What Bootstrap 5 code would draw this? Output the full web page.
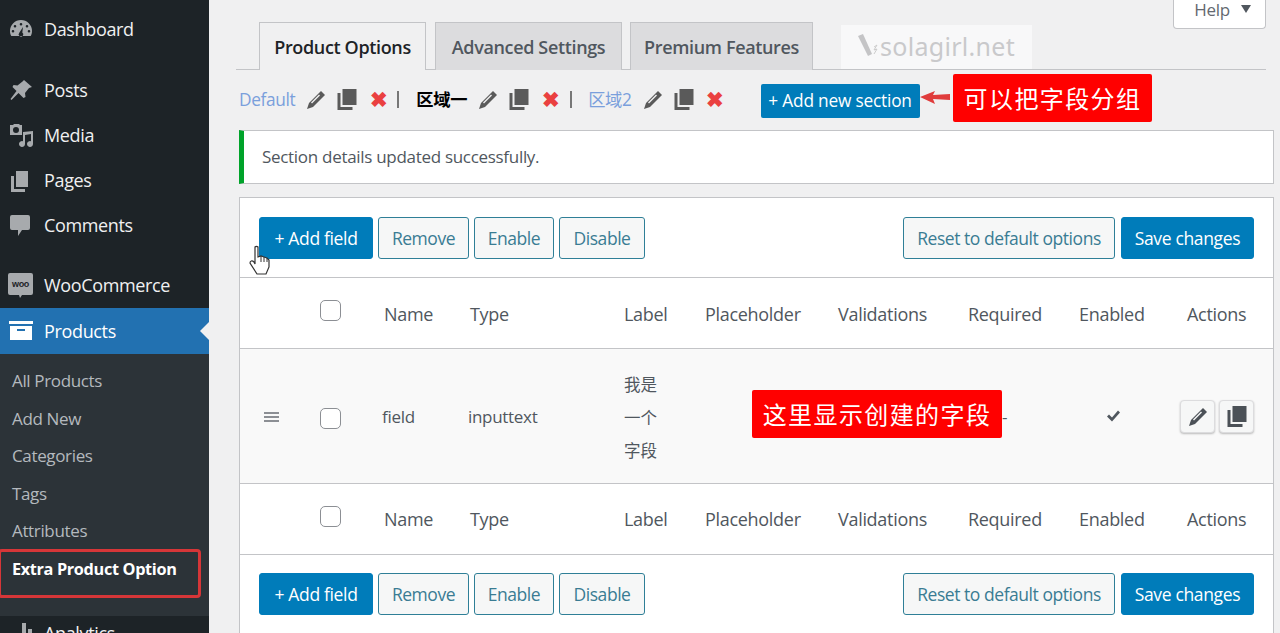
<!DOCTYPE html>
<html lang="en"><head><meta charset="utf-8"><title>Product Options</title>
<link href="https://cdn.jsdelivr.net/npm/bootstrap@5.3.0/dist/css/bootstrap.min.css" rel="stylesheet">
<style>
html,body{height:633px;overflow:hidden}
body{font-family:"Open Sans","Noto Sans CJK SC",sans-serif;background:#f0f0f1;color:#50575e;font-size:17px;letter-spacing:-.35px}
.shell{height:633px;overflow:hidden}
.wp-side{width:209px;flex:none;background:#1d2327;color:#f0f0f1;padding-top:7px;height:633px;overflow:hidden;font-size:18px}
.side-item{height:45px;display:flex;align-items:center;gap:0;color:#f0f0f1}
.side-item .ico{width:44px;padding-left:9px;flex:none;display:flex;align-items:center}
.side-item svg{fill:#a7aaad}
.gap-a{margin-top:17px}
.gap-b{margin-top:14.5px}
.side-active{background:#2271b1;color:#fff;position:relative;height:46px;padding-top:1px}
.side-active svg{fill:#fff}
.side-active::after{content:"";position:absolute;right:0;top:14px;border:9px solid transparent;border-right-color:#f0f0f1;border-left:0}
.side-sub{background:#2c3338;padding:8.5px 0 0;height:262px;color:#b4b9be;margin-bottom:0}
.side-sub div{height:37.5px;display:flex;align-items:center;padding-left:12px;font-size:17px}
.side-sub .cur{color:#fff;font-weight:700;font-size:16.3px;padding-top:1px}
.side-box{position:absolute;left:-2px;top:549px;width:203px;height:49px;border:3px solid #d63638;border-radius:4px}
.wp-main{flex:1;min-width:0;position:relative;padding-right:6px}
.help-line{height:22px;display:flex;justify-content:flex-end;padding-right:8px}
.help-btn{width:93px;height:30px;margin-top:-1px;background:#fff;border:1px solid #c3c4c7;border-top:0;border-radius:0 0 4px 4px;color:#646970;font-size:17px;display:flex;align-items:flex-start;justify-content:center;gap:9px;line-height:22px;padding-left:6px}
.help-btn i{border:5px solid transparent;border-top:8px solid #50575e;border-bottom:0;margin-left:2px;margin-top:6px;width:0;height:0}
.tab-bar{margin-left:27px;margin-right:8px;border-bottom:1px solid #c3c4c7;display:flex;padding-left:23px;height:48px;gap:8px}
.tab-it{height:48px;border:1px solid #c3c4c7;border-bottom:0;background:#dcdcde;font-size:18px;font-weight:600;color:#50575e;display:flex;align-items:center;justify-content:center;letter-spacing:-.35px;padding-top:2px}
.tab-on{background:#f0f0f1;color:#1d2327;height:48px;margin-bottom:-1px;margin-right:1px}
.mark-w{margin-left:20px;margin-top:3px;width:191px;height:44px;background:#f8f8f9;color:#c9c9cb;font-size:25px;display:flex;align-items:center;padding-left:15px;gap:1px;letter-spacing:.3px;font-family:"Noto Sans",sans-serif}
.sec-row{margin-left:30px;height:59px;display:flex;align-items:center;font-size:17.3px;position:relative}
.sec-row a{color:#7a9fdc;text-decoration:none}
.sec-act{display:flex;align-items:center;gap:11px;margin-left:11px;margin-right:10px}
.x-mark{color:#ea4040;font-weight:700;margin-left:2px;font-size:21px;line-height:1;width:17px;display:flex;justify-content:center}
.sec-sep{width:2px;height:17px;background:#777;margin-right:17px}
.sec-sep.tail{margin-right:16px}
.sec-cur{color:#000;font-weight:700}
.add-sec{margin-left:27px;margin-top:2px;height:34px;width:159px;padding:0;background:#007cba;color:#fff;font-size:17.3px;border:0;border-radius:2px;letter-spacing:-.2px;white-space:nowrap}
.notice-ok{margin-left:30px;height:54px;margin-top:1px;background:#fff;border:1px solid #c3c4c7;border-left:5px solid #00a32a;padding-left:18px;display:flex;align-items:center;font-size:17px;color:#50575e;letter-spacing:-.3px}
.opt-panel{margin:13px 0 0 30px;background:#fff;border:1px solid #c3c4c7;border-bottom:0;height:460px}
.opt-tools{height:79px;padding:19px 19px 0;display:flex;gap:5px}
.opt-tools.low{padding-top:18px}
.tool-btn{height:42px;padding:0;background:#f6f7f7;border:1px solid #2f7f97;border-radius:3px;color:#3a7c93;font-size:17.5px;letter-spacing:-.45px;white-space:nowrap}
.tool-pri{background:#007cba;border-color:#007cba;color:#fff;letter-spacing:-.35px}
.w-add{width:114px}.w-rem{width:91px}.w-ena{width:80px}.w-dis{width:86px}.w-res{width:212px;margin-right:1px}.w-sav{width:133px}
.opt-grid{table-layout:fixed;width:100%;margin:0;border-collapse:collapse}
.opt-grid th,.opt-grid td{padding:0;font-weight:400;vertical-align:middle;font-size:18px;color:#50575e;border-top:1px solid #c3c4c7;background:transparent;white-space:nowrap;letter-spacing:-.3px}
.opt-grid .r-h{height:71px}
.opt-grid .r-top th:nth-child(n+3){padding-top:2px}
.opt-grid .r-f{height:135px;background:#f9f9f9}
.opt-grid .r-f td{font-size:17px;padding-top:2px}
.opt-grid tr:last-child th{border-bottom:1px solid #c3c4c7}
.cb-box{width:21px;height:21px;display:block;margin-left:80px;border:1px solid #8c8f94;border-radius:5px;background:#fff;margin-top:-6px}
.r-f .cb-box{margin-top:3px}
.drag-bars{display:block;width:15px;height:10px;margin-left:24px;border-top:2px solid #8c8f94;border-bottom:2px solid #8c8f94;position:absolute;top:4px}
.drag-bars::after{content:"";position:absolute;left:0;right:0;top:2px;height:2px;background:#8c8f94}
.lab-cn{line-height:33px;white-space:normal;width:40px;font-size:16.5px;letter-spacing:0}
.icon-btn{width:35px;height:33px;background:#f6f7f7;border:1px solid #dcdcde;border-radius:4px;box-shadow:0 1px 2px #bbb;display:flex;align-items:center;justify-content:center;padding:0}
.act-cell{margin-left:-7px;margin-top:-1px}
.dash-c{display:block;padding-left:34px}
.tick-s{margin:0 0 6px 27px}
.note-red{position:absolute;background:#f00;color:#fff;border-radius:2px;display:flex;align-items:center;justify-content:center;letter-spacing:1.4px;font-size:24px;font-family:"Noto Sans CJK SC",sans-serif}
.note-a{left:744px;top:74px;width:199px;height:48px}
.note-b{left:543px;top:390px;width:250px;height:48px}
.arrow-r{position:absolute;left:711px;top:89px}
.hand-c{position:absolute;left:40px;top:245px}
.pull-a{margin-left:-2px}
</style></head><body>
<div class="shell d-flex position-relative">
<nav class="wp-side">
 <div class="side-item" style="height:44px"><span class="ico"><svg width="24" height="24" viewBox="0 0 24 24"><path d="M12 3A11 11 0 0 0 1 14c0 2 .5 3.600 1.300 5h19.400c.8-1.400 1.300-3 1.300-5A11 11 0 0 0 12 3zm0 3a1.300 1.300 0 1 1 0 2.600a1.300 1.300 0 0 1 0-2.600zM6 8a1.300 1.300 0 1 1 0 2.600A1.300 1.300 0 0 1 6 8zm12 0a1.300 1.300 0 1 1 0 2.600A1.300 1.300 0 0 1 18 8zM4 13a1.300 1.300 0 1 1 0 2.600A1.300 1.300 0 0 1 4 13zm16 0a1.300 1.300 0 1 1 0 2.600 1.300 1.300 0 0 1 0-2.600zM14 10l-.7 5.500a2.300 2.300 0 1 1-3 .3z" fill-rule="evenodd"/></svg></span>Dashboard</div>
 <div class="side-item gap-a"><span class="ico"><svg width="24" height="24" viewBox="0 0 24 24"><path d="M15 1l8 7-3 1-4 5 .5 4-2 1-5-5-7 7-1-1 6-8-4-4 1-2 4 .5 5-4z"/></svg></span>Posts</div>
 <div class="side-item"><span class="ico"><svg width="25" height="25" viewBox="0 0 25 25"><path d="M1 2h3l1-1h5l1 1h2v10H1zm6 2a3 3 0 1 0 0 6 3 3 0 0 0 0-6zM24 8v13a3 3 0 1 1-2-2.800V11l-6 1v9a3 3 0 1 1-2-2.800V9z" fill-rule="evenodd"/></svg></span>Media</div>
 <div class="side-item"><span class="ico"><svg width="24" height="24" viewBox="0 0 24 24"><path d="M7 1h12v16H7zM2 6h3v13h11v3H2z" transform="translate(0,1)"/></svg></span>Pages</div>
 <div class="side-item"><span class="ico"><svg width="24" height="24" viewBox="0 0 24 24"><path d="M3 1h16a2 2 0 0 1 2 2v11a2 2 0 0 1-2 2h-6l-4 6v-6H3a2 2 0 0 1-2-2V3a2 2 0 0 1 2-2z"/></svg></span>Comments</div>
 <div class="side-item gap-b"><span class="ico" style="padding-left:7px"><svg width="27" height="27" viewBox="0 0 27 27"><path d="M3 1h21a2 2 0 0 1 2 2v18a2 2 0 0 1-2 2h-9l-2 3-1-3H3a2 2 0 0 1-2-2V3a2 2 0 0 1 2-2z"/><text x="13.500" y="15" font-size="9" font-weight="700" fill="#1d2327" text-anchor="middle" font-family="Liberation Sans,sans-serif">woo</text></svg></span>WooCommerce</div>
 <div class="side-item side-active"><span class="ico"><svg width="24" height="22" viewBox="0 0 24 22"><path d="M0 1h24v3H0zM1 6h22v14H1zm7 3v2h8V9z" fill-rule="evenodd"/></svg></span>Products</div>
 <div class="side-sub"><div>All Products</div><div>Add New</div><div>Categories</div><div>Tags</div><div>Attributes</div><div class="cur">Extra Product Option</div></div>
 <div class="side-item" style="height:24px;margin-top:6px;align-items:flex-start"><span class="ico" style="padding-left:17px"><svg width="16" height="22" viewBox="0 0 16 22"><path d="M0 12h4v10H0zM6 0h4v22H6zM12 6h4v16h-4z" transform="translate(-1,1)"/></svg></span><span style="line-height:22px">Analytics</span></div>
</nav>
<main class="wp-main">
 <div class="help-line"><div class="help-btn">Help <i></i></div></div>
 <div class="tab-bar">
  <div class="tab-it tab-on" style="width:167px">Product Options</div>
  <div class="tab-it" style="width:187px">Advanced Settings</div>
  <div class="tab-it" style="width:183px">Premium Features</div>
  <div class="mark-w"><svg width="23" height="28" viewBox="0 0 23 28"><path d="M2 3l5-2 9 20-4 2z" fill="#c4c4c6"/><path d="M18 14l3-2-3 5 3-1-3 5" fill="none" stroke="#ccc"/></svg>solagirl.net</div>
 </div>
 <div class="sec-row">
  <a href="#">Default</a>
  <span class="sec-act"><svg width="20" height="20" viewBox="0 0 20 20"><path d="M15 1l4 4L7 17l-6 2 2-6z" fill="#5a5a5a"/><path d="M13.500 5L5.500 13" stroke="#f0f0f1" stroke-width="1.500"/></svg><svg width="20" height="21" viewBox="0 0 19 21"><path d="M5 0h14v16H5zM0 4h3v14h12v3H0z" fill="#5a5a5a"/></svg><span class="x-mark">✖</span></span>
  <span class="sec-sep"></span>
  <span class="sec-cur">区域一</span>
  <span class="sec-act" style="margin-right:11px"><svg width="20" height="20" viewBox="0 0 20 20"><path d="M15 1l4 4L7 17l-6 2 2-6z" fill="#5a5a5a"/><path d="M13.500 5L5.500 13" stroke="#f0f0f1" stroke-width="1.500"/></svg><svg width="20" height="21" viewBox="0 0 19 21"><path d="M5 0h14v16H5zM0 4h3v14h12v3H0z" fill="#5a5a5a"/></svg><span class="x-mark">✖</span></span>
  <span class="sec-sep tail"></span>
  <a href="#">区域2</a>
  <span class="sec-act"><svg width="20" height="20" viewBox="0 0 20 20"><path d="M15 1l4 4L7 17l-6 2 2-6z" fill="#5a5a5a"/><path d="M13.500 5L5.500 13" stroke="#f0f0f1" stroke-width="1.500"/></svg><svg width="20" height="21" viewBox="0 0 19 21"><path d="M5 0h14v16H5zM0 4h3v14h12v3H0z" fill="#5a5a5a"/></svg><span class="x-mark">✖</span></span>
  <button class="add-sec">+ Add new section</button>
 </div>
 <div class="notice-ok">Section details updated successfully.</div>
 <section class="opt-panel">
  <div class="opt-tools">
   <button class="tool-btn tool-pri w-add">+ Add field</button><button class="tool-btn w-rem">Remove</button><button class="tool-btn w-ena">Enable</button><button class="tool-btn w-dis">Disable</button>
   <span class="ms-auto"></span>
   <button class="tool-btn w-res">Reset to default options</button><button class="tool-btn tool-pri w-sav">Save changes</button>
  </div>
  <table class="opt-grid"><colgroup><col style="width:144px"><col style="width:0"><col style="width:86px"><col style="width:154px"><col style="width:81px"><col style="width:133px"><col style="width:130px"><col style="width:111px"><col style="width:108px"><col></colgroup>
  <tbody>
  <tr class="r-h r-top"><th><span class="cb-box"></span></th><th></th><th>Name</th><th>Type</th><th>Label</th><th>Placeholder</th><th>Validations</th><th>Required</th><th>Enabled</th><th>Actions</th></tr>
  <tr class="r-f"><td><span class="position-relative d-block"><span class="drag-bars"></span><span class="cb-box"></span></span></td><td></td><td><span class="pull-a d-block">field</span></td><td><span class="pull-a d-block">inputtext</span></td><td><div class="lab-cn">我是一个字段</div></td><td></td><td></td><td><span class="dash-c">-</span></td><td><svg class="tick-s" width="15" height="14" viewBox="0 0 15 13"><path d="M1 7l2-2 3 3 6-7 2 2-8 9z" fill="#50575e"/></svg></td><td><div class="d-flex gap-1 act-cell"><button class="icon-btn"><svg width="20" height="20" viewBox="0 0 20 20"><path d="M15 1l4 4L7 17l-6 2 2-6z" fill="#4b5157"/><path d="M13.500 5L5.500 13" stroke="#f6f7f7" stroke-width="1.500"/></svg></button><button class="icon-btn"><svg width="20" height="21" viewBox="0 0 19 21"><path d="M5 0h14v16H5zM0 4h3v14h12v3H0z" fill="#4b5157"/></svg></button></div></td></tr>
  <tr class="r-h"><th><span class="cb-box"></span></th><th></th><th>Name</th><th>Type</th><th>Label</th><th>Placeholder</th><th>Validations</th><th>Required</th><th>Enabled</th><th>Actions</th></tr>
  </tbody></table>
  <div class="opt-tools low">
   <button class="tool-btn tool-pri w-add">+ Add field</button><button class="tool-btn w-rem">Remove</button><button class="tool-btn w-ena">Enable</button><button class="tool-btn w-dis">Disable</button>
   <span class="ms-auto"></span>
   <button class="tool-btn w-res">Reset to default options</button><button class="tool-btn tool-pri w-sav">Save changes</button>
  </div>
 </section>
 <div class="note-red note-a">可以把字段分组</div>
 <svg class="arrow-r" width="31" height="16" viewBox="0 0 31 16"><path d="M0 8l15-6-2 4 17-1v6l-17-1 2 5z" fill="#e03c3c"/></svg>
 <div class="note-red note-b">这里显示创建的字段</div>
 <svg class="hand-c" width="22" height="30" viewBox="0 0 22 30"><path d="M6 2a2 2 0 0 1 3 0v10l3-1 3 1 3 1 2 2v7l-3 7H8L1 18c0-2 2-3 4-1l1 2z" fill="#fff" stroke="#333" stroke-width="1.200"/><path d="M12 11v6M15 12v5M18 13v4" stroke="#333" fill="none"/></svg>
</main>
<div class="side-box"></div>
</div>
</body></html>
